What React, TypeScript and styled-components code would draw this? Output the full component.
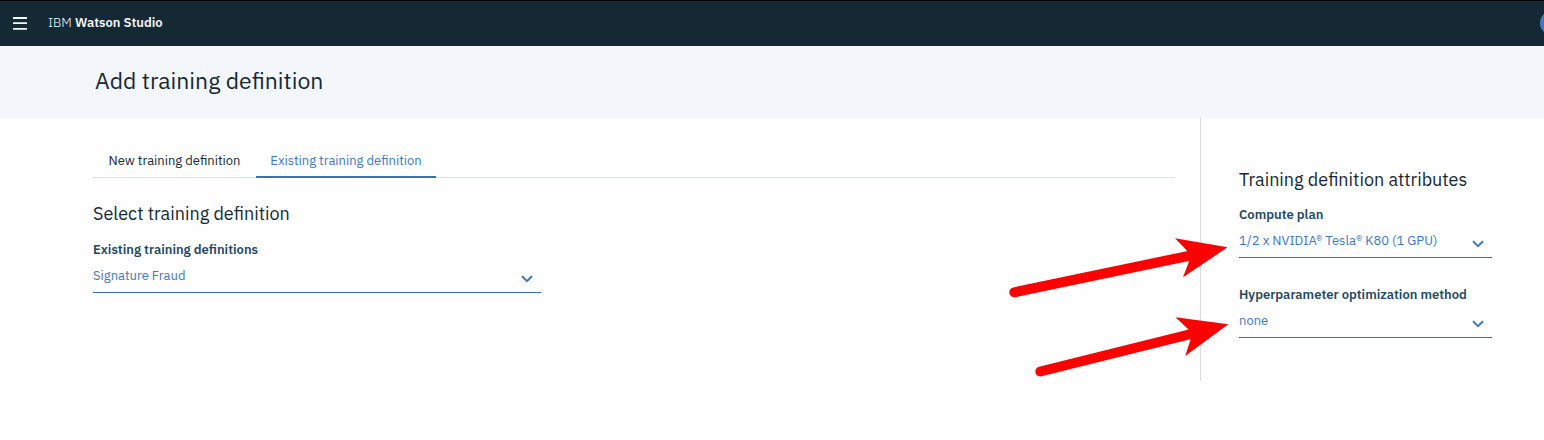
import React from "react";
import styled, { createGlobalStyle } from "styled-components";

const GlobalStyle = createGlobalStyle`
  *, *::before, *::after { box-sizing: border-box; }
  body {
    margin: 0;
    background: #fefefe;
    color: #152935;
    font-family: "IBM Plex Sans", Roboto, "Liberation Sans", sans-serif;
    font-size: 13px;
    line-height: 20px;
  }
  h1, h2 { margin: 0; font-weight: 400; }
  button, select { font: inherit; }
`;

const TopBar = styled.header`
  display: flex;
  align-items: center;
  height: 46px;
  padding: 0 0 2px 12px;
  border-top: 1px solid #000;
  background: #152935;
  color: #f4f7fb;
  overflow: hidden;
`;

const MenuButton = styled.button`
  display: flex;
  padding: 0;
  border: 0;
  background: none;
  color: inherit;
`;

const Brand = styled.a`
  flex: 1;
  margin-left: 20px;
  color: inherit;
  font-weight: 300;
  text-decoration: none;
  strong { font-weight: 600; }
`;

const Avatar = styled.button`
  flex: none;
  width: 24px;
  height: 24px;
  margin-right: -20px;
  padding: 0;
  border: 0;
  border-radius: 50%;
  background: #4178be;
`;

const TitleBand = styled.div`
  display: flex;
  align-items: center;
  height: 72px;
  padding: 0 95px 4px;
  background: #f3f6fb;
`;

const PageTitle = styled.h1`
  font-size: 23px;
  line-height: 32px;
`;

const Columns = styled.div`
  display: flex;
  align-items: flex-start;
`;

const Main = styled.main`
  flex: 1;
  min-width: 0;
  padding: 26px 25px 0 93px;
`;

const Attributes = styled.aside`
  position: relative;
  width: 344px;
  padding: 50px 52px 43px 38px;
  border-left: 1px solid #dcdcdc;
`;

const Tabs = styled.div`
  display: flex;
  height: 34px;
  border-bottom: 1px solid #dfe3e6;
`;

const Tab = styled.button<{ $active?: boolean; $width: number }>`
  width: ${(p) => p.$width}px;
  height: 34px;
  padding: 2px 0 0;
  border: 0;
  border-bottom: 2px solid ${(p) => (p.$active ? "#3d70b2" : "transparent")};
  background: none;
  color: ${(p) => (p.$active ? "#4178be" : "#152935")};
  white-space: nowrap;
`;

const SectionTitle = styled.h2`
  font-size: 18px;
  line-height: 24px;
`;

const Panel = styled.section`
  width: 448px;
  max-width: 100%;
  padding-top: 24px;
`;

const Field = styled.div<{ $gap: number }>`
  display: flex;
  flex-direction: column;
  margin-top: ${(p) => p.$gap}px;
`;

const Label = styled.label`
  color: #264a60;
  font-weight: 600;
`;

const SelectBox = styled.div`
  position: relative;
  display: flex;
  height: 33px;
  border-bottom: 1px solid #3d70b2;
  svg {
    position: absolute;
    right: 8px;
    bottom: 9px;
    pointer-events: none;
  }
`;

const Select = styled.select`
  appearance: none;
  width: 100%;
  padding: 0 32px 0 0;
  border: 0;
  border-radius: 0;
  background: transparent;
  color: #4178be;
`;

const Pointers = styled.svg`
  position: absolute;
  top: 110px;
  left: -191px;
  pointer-events: none;
`;

type DropdownProps = { id: string; label: string; value: string; gap: number };

function Dropdown({ id, label, value, gap }: DropdownProps) {
  return (
    <Field $gap={gap}>
      <Label htmlFor={id}>{label}</Label>
      <SelectBox>
        <Select id={id} defaultValue={value}>
          <option>{value}</option>
        </Select>
        <svg width="12" height="8" viewBox="0 0 12 8" fill="none" aria-hidden="true">
          <path d="M1 1.2 L6 6.2 L11 1.2" stroke="#4178be" strokeWidth="2" />
        </svg>
      </SelectBox>
    </Field>
  );
}

export default function App() {
  return (
    <>
      <GlobalStyle />
      <TopBar>
        <MenuButton aria-label="Open menu">
          <svg width="16" height="14" viewBox="0 0 16 14" aria-hidden="true">
            <path d="M1 2h14M1 7.2h14M1 12.8h14" stroke="#f4f7fb" strokeWidth="1.8" />
          </svg>
        </MenuButton>
        <Brand href="#">
          IBM <strong>Watson Studio</strong>
        </Brand>
        <Avatar aria-label="Profile" />
      </TopBar>
      <TitleBand>
        <PageTitle>Add training definition</PageTitle>
      </TitleBand>
      <Columns>
        <Main>
          <Tabs role="tablist">
            <Tab role="tab" aria-selected={false} $width={163}>
              New training definition
            </Tab>
            <Tab role="tab" aria-selected $active $width={180}>
              Existing training definition
            </Tab>
          </Tabs>
          <Panel>
            <SectionTitle>Select training definition</SectionTitle>
            <Dropdown
              id="definition"
              label="Existing training definitions"
              value="Signature Fraud"
              gap={14}
            />
          </Panel>
        </Main>
        <Attributes>
          <SectionTitle>Training definition attributes</SectionTitle>
          <Dropdown
            id="plan"
            label="Compute plan"
            value="1/2 x NVIDIA® Tesla® K80 (1 GPU)"
            gap={13}
          />
          <Dropdown
            id="method"
            label="Hyperparameter optimization method"
            value="none"
            gap={27}
          />
          <Pointers width="228" height="140" viewBox="1010 228 228 140" overflow="visible" aria-hidden="true">
            <g stroke="#f00" strokeWidth="10" strokeLinecap="round">
              <path d="M1014.3 292.3 L1190 255.6" />
              <path d="M1040.3 371.5 L1191 334" />
            </g>
            <path
              fill="#f00"
              d="M1227.5 247.3 L1175 238.2 L1187.3 251 L1189.3 260.7 L1183 277.2 Z M1228.3 324.3 L1175.5 317.2 L1188.3 329.3 L1190.7 339 L1185.2 355.9 Z"
            />
          </Pointers>
        </Attributes>
      </Columns>
    </>
  );
}
